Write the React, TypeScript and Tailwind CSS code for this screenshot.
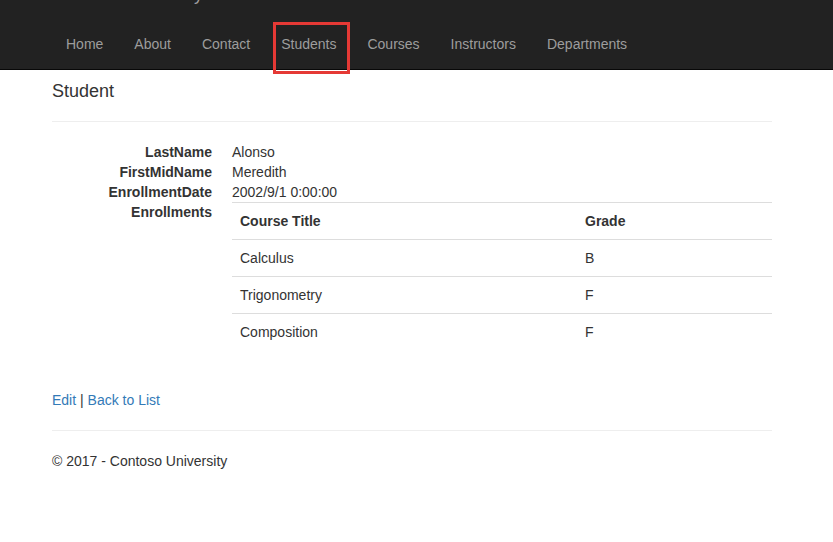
import React from 'react';

const navItems = ['Home', 'About', 'Contact', 'Students', 'Courses', 'Instructors', 'Departments'];

const details = [
  { label: 'LastName', value: 'Alonso' },
  { label: 'FirstMidName', value: 'Meredith' },
  { label: 'EnrollmentDate', value: '2002/9/1 0:00:00' },
];

const enrollments = [
  { title: 'Calculus', grade: 'B' },
  { title: 'Trigonometry', grade: 'F' },
  { title: 'Composition', grade: 'F' },
];

const App = () => {
  return (
    <div className="relative min-h-[542px] bg-white text-[14px] leading-[20px] text-[#333] font-['Liberation_Sans',Arial,sans-serif]">
      {/* navbar, brand is scrolled just out of view */}
      <div className="h-[70px] overflow-hidden bg-[#222] border-b border-[#080808]">
        <div className="ml-[52px]">
          <div className="-mt-[31px] h-[50px] py-[15px] text-[18px] leading-[20px] text-[#9d9d9d]">
            Contoso University
          </div>
          <ul className="flex h-[50px] -ml-[1.5px]">
            {navItems.map((item) => (
              <li key={item}>
                <a className="block px-[15.5px] py-[15px] leading-[20px] text-[#9d9d9d]" href="#">
                  {item}
                </a>
              </li>
            ))}
          </ul>
        </div>
      </div>

      {/* annotation around Students */}
      <div className="absolute left-[273px] top-[22px] w-[77px] h-[52px] border-[3px] border-[#e53935]" />

      <div className="ml-[52px] w-[720px]">
        <h4 className="mt-[12px] mb-[10px] text-[18px] leading-[19.8px] font-normal">Student</h4>
        <hr className="mt-[19px] mb-[20px] border-0 border-t border-[#eee]" />

        <dl className="mb-[20px]">
          {details.map((d) => (
            <div key={d.label} className="flex">
              <dt className="w-[160px] shrink-0 text-right font-bold">{d.label}</dt>
              <dd className="ml-[20px]">{d.value}</dd>
            </div>
          ))}
          <div className="flex">
            <dt className="w-[160px] shrink-0 text-right font-bold">Enrollments</dt>
            <dd className="ml-[20px] flex-1">
              <table className="w-full mb-[20px] border-collapse">
                <tbody>
                  <tr>
                    <th className="w-[345px] p-[8px] text-left font-bold border-t border-[#ddd]">Course Title</th>
                    <th className="p-[8px] text-left font-bold border-t border-[#ddd]">Grade</th>
                  </tr>
                  {enrollments.map((e) => (
                    <tr key={e.title}>
                      <td className="p-[8px] border-t border-[#ddd]">{e.title}</td>
                      <td className="p-[8px] border-t border-[#ddd]">{e.grade}</td>
                    </tr>
                  ))}
                </tbody>
              </table>
            </dd>
          </div>
        </dl>

        <div>
          <a className="text-[#337ab7]" href="#">Edit</a> |{' '}
          <a className="text-[#337ab7]" href="#">Back to List</a>
        </div>

        <hr className="mt-[20px] mb-[20px] border-0 border-t border-[#eee]" />
        <footer>
          <p>© 2017 - Contoso University</p>
        </footer>
      </div>
    </div>
  );
};

export default App;
